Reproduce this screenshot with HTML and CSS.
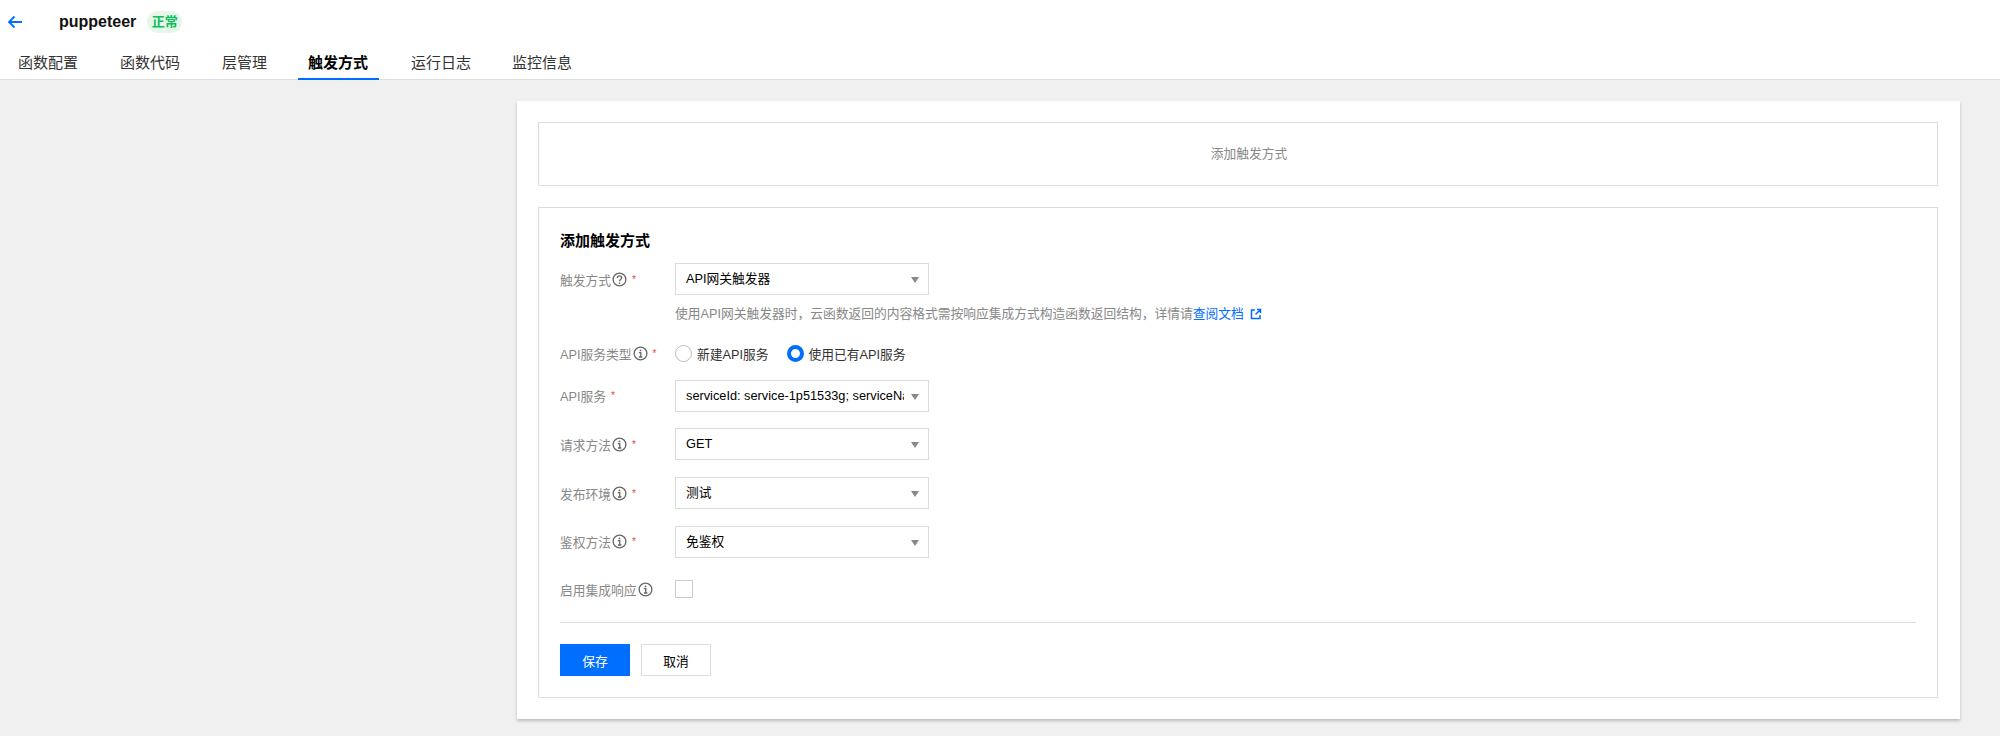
FILE: index.html
```html
<!DOCTYPE html>
<html lang="zh">
<head>
<meta charset="utf-8">
<title>puppeteer</title>
<link rel="stylesheet" href="styles.css">
</head>
<body>
<header class="top">
  <div class="title-bar">
    <svg class="back" viewBox="0 0 16 14" width="16" height="14"><path d="M15 7H2M7.500 1.500 2 7l5.500 5.500" fill="none" stroke="#006eff" stroke-width="1.800"/></svg>
    <span class="name">puppeteer</span>
    <span class="tag">正常</span>
  </div>
  <nav class="tabs">
    <a class="tab">函数配置</a>
    <a class="tab">函数代码</a>
    <a class="tab">层管理</a>
    <a class="tab active">触发方式</a>
    <a class="tab">运行日志</a>
    <a class="tab">监控信息</a>
  </nav>
</header>
<main class="panel">
  <div class="box add-box">添加触发方式</div>
  <section class="box form-box">
    <h3 class="form-title">添加触发方式</h3>
    <div class="row">
      <label class="label">触发方式<svg class="ico" viewBox="0 0 16 16"><circle cx="8" cy="8" r="6.800" fill="none" stroke="#666" stroke-width="1.400"/><path d="M5.700 6.300C5.700 5 6.700 4.200 8 4.200s2.300.8 2.300 2c0 1.800-2.300 1.700-2.300 3.600" fill="none" stroke="#666" stroke-width="1.400"/><circle cx="8" cy="11.800" r=".9" fill="#666"/></svg><i class="req">*</i></label>
      <div class="select"><span class="val">API网关触发器</span><b class="caret"></b></div>
    </div>
    <p class="hint">使用API网关触发器时&#65292;云函数返回的内容格式需按响应集成方式构造函数返回结构&#65292;详情请<a class="link">查阅文档<svg class="ext" viewBox="0 0 12 12"><path d="M5 2H1.500v8.500H10V7M7 1.500h3.500V5M10.300 1.700 5.500 6.500" fill="none" stroke="#006eff" stroke-width="1.500"/></svg></a></p>
    <div class="row row-radio">
      <label class="label">API服务类型<svg class="ico" viewBox="0 0 16 16"><use href="#info"/></svg><i class="req">*</i></label>
      <span class="radio"><i class="dot"></i>新建API服务</span>
      <span class="radio"><i class="dot on"></i>使用已有API服务</span>
    </div>
    <div class="row">
      <label class="label">API服务<i class="req">*</i></label>
      <div class="select"><span class="val">serviceId: service-1p51533g; serviceName: puppeteer</span><b class="caret"></b></div>
    </div>
    <div class="row">
      <label class="label">请求方法<svg class="ico" viewBox="0 0 16 16"><use href="#info"/></svg><i class="req">*</i></label>
      <div class="select"><span class="val">GET</span><b class="caret"></b></div>
    </div>
    <div class="row">
      <label class="label">发布环境<svg class="ico" viewBox="0 0 16 16"><use href="#info"/></svg><i class="req">*</i></label>
      <div class="select"><span class="val">测试</span><b class="caret"></b></div>
    </div>
    <div class="row">
      <label class="label">鉴权方法<svg class="ico" viewBox="0 0 16 16"><use href="#info"/></svg><i class="req">*</i></label>
      <div class="select"><span class="val">免鉴权</span><b class="caret"></b></div>
    </div>
    <div class="row row-check">
      <label class="label">启用集成响应<svg class="ico" viewBox="0 0 16 16"><use href="#info"/></svg></label>
      <span class="check"></span>
    </div>
    <div class="actions">
      <button class="btn primary">保存</button>
      <button class="btn">取消</button>
    </div>
  </section>
</main>
<svg class="defs" width="0" height="0"><defs><g id="info"><circle cx="8" cy="8" r="6.800" fill="none" stroke="#666" stroke-width="1.400"/><circle cx="8" cy="4.700" r="1" fill="#666"/><path d="M6.300 7H8.300V11.500M6.300 11.700H10" fill="none" stroke="#666" stroke-width="1.400"/></g></defs></svg>
</body>
</html>
```
FILE: styles.css
```css
* { box-sizing: border-box; }
html, body { margin: 0; padding: 0; }
body {
  background: #f0f0f0;
  font-family: "Liberation Sans", "Noto Sans CJK SC", sans-serif;
  font-size: 12.75px;
  color: #000;
  height: 736px;
  overflow: hidden;
}
.top {
  background: #fff;
  height: 80px;
  border-bottom: 1px solid #ddd;
}
.title-bar {
  display: flex;
  align-items: center;
  height: 44px;
  padding-left: 7px;
}
.back { flex: none; }
.name {
  margin-left: 36px;
  font-size: 16px;
  font-weight: 700;
  color: #111;
}
.tag {
  margin-left: 11px;
  width: 35px;
  height: 22px;
  line-height: 22px;
  text-align: center;
  background: #e6f7ea;
  border-radius: 11px;
  color: #0abf5b;
  font-size: 13px;
  font-weight: 700;
}
.tabs {
  display: flex;
  height: 36px;
  padding-left: 8px;
}
.tab {
  width: 102px;
  padding-left: 10px;
  font-size: 15px;
  line-height: 37px;
  color: #333;
}
.tab:nth-child(3) { width: 86px; }
.tab:nth-child(5) { width: 101px; }
.tab.active {
  width: 81px;
  margin-right: 22px;
  color: #000;
  font-weight: 700;
  border-bottom: 2px solid #006eff;
}
.panel {
  margin: 21px 0 0 517px;
  width: 1443px;
  height: 618px;
  background: #fff;
  padding: 21px 22px 0 21px;
  box-shadow: 0 2px 3px rgba(0, 0, 0, .22);
}
.box { border: 1px solid #dcdcdc; }
.add-box {
  height: 64px;
  line-height: 62px;
  padding-left: 22px;
  text-align: center;
  color: #888;
}
.form-box {
  margin-top: 21px;
  height: 491px;
  padding: 23px 21px 0;
}
.form-title {
  margin: 0 0 12px;
  font-size: 15px;
  line-height: 20px;
  font-weight: 700;
}
.row {
  display: flex;
  align-items: center;
  height: 32px;
  margin-bottom: 16.7px;
}
.row-radio { height: 20px; margin-bottom: 16px; }
.row-check { height: 30px; margin-bottom: 18px; }
.label {
  flex: none;
  width: 115px;
  display: flex;
  align-items: center;
  color: #888;
}
.ico { width: 15px; height: 15px; margin-left: 1px; flex: none; }
.req {
  margin-left: 5px;
  font-style: normal;
  color: #e54545;
  font-size: 10px;
}
.select {
  position: relative;
  width: 254px;
  height: 32px;
  border: 1px solid #dcdcdc;
  background: #fff;
  line-height: 30px;
  padding: 0 10px;
}
.val {
  display: block;
  width: 218px;
  white-space: nowrap;
  overflow: hidden;
}
.caret {
  position: absolute;
  right: 9px;
  top: 13px;
  border: 4.500px solid transparent;
  border-top: 6px solid #888;
  border-bottom: 0;
}
.hint {
  margin: -8px 0 20px 115px;
  height: 20px;
  line-height: 20px;
  color: #888;
}
.link { color: #006eff; }
.ext { width: 12px; height: 12px; margin-left: 6px; vertical-align: -2px; }
.radio {
  display: flex;
  align-items: center;
  margin-right: 18px;
  color: #333;
}
.dot {
  width: 17px;
  height: 17px;
  margin-right: 5px;
  border: 1px solid #bbb;
  border-radius: 50%;
  background: #fff;
}
.dot.on { border: 4.500px solid #006eff; }
.check {
  width: 18px;
  height: 18px;
  border: 1px solid #ccc;
  background: #fff;
}
.actions {
  border-top: 1px solid #dcdcdc;
  padding-top: 21px;
  display: flex;
  gap: 11px;
}
.btn {
  width: 70px;
  height: 32px;
  border: 1px solid #dcdcdc;
  background: #fff;
  color: #000;
  font: inherit;
  padding: 0;
}
.btn.primary {
  background: #006eff;
  border-color: #006eff;
  color: #fff;
}
.defs { position: absolute; }
```
